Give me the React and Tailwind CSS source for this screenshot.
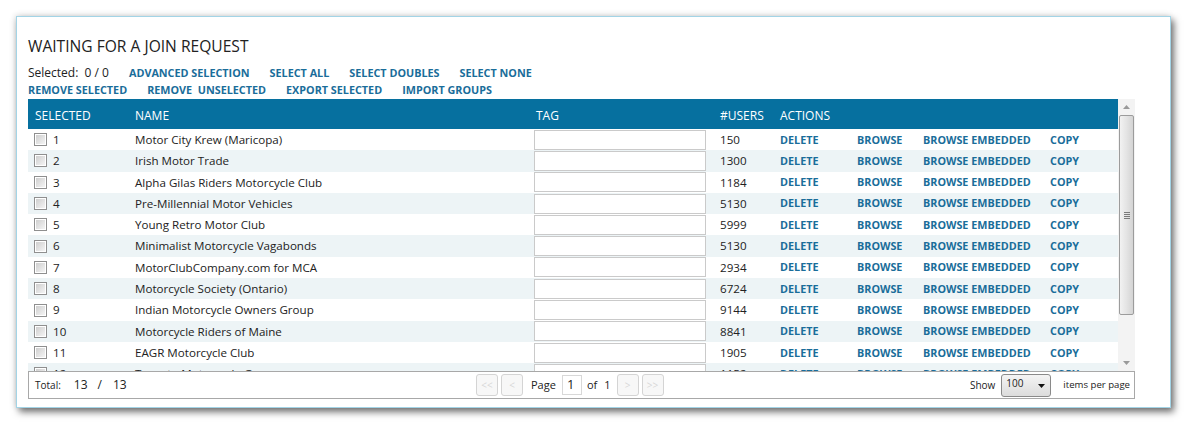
const rows = [
  [1, "Motor City Krew (Maricopa)", 150],
  [2, "Irish Motor Trade", 1300],
  [3, "Alpha Gilas Riders Motorcycle Club", 1184],
  [4, "Pre-Millennial Motor Vehicles", 5130],
  [5, "Young Retro Motor Club", 5999],
  [6, "Minimalist Motorcycle Vagabonds", 5130],
  [7, "MotorClubCompany.com for MCA", 2934],
  [8, "Motorcycle Society (Ontario)", 6724],
  [9, "Indian Motorcycle Owners Group", 9144],
  [10, "Motorcycle Riders of Maine", 8841],
  [11, "EAGR Motorcycle Club", 1905],
  [12, "Toronto Motorcycle Group", 1152],
];

const font = { fontFamily: '"Open Sans", "Noto Sans", sans-serif' };

function Checkbox() {
  return (
    <span className="flex h-[13px] w-[13px] items-center justify-center border border-[#8f8f8f] bg-white">
      <span className="h-[9px] w-[9px] bg-gradient-to-br from-[#cfcfcf] to-[#f4f4f4]" />
    </span>
  );
}

function Link({ children, className = "" }) {
  return <span className={`text-[10.8px] font-bold text-[#1a6d9a] ${className}`}>{children}</span>;
}

function PageButton({ children }) {
  return (
    <span className="flex h-[22px] w-[22px] items-center justify-center rounded-[3px] border border-[#d4d4d4] bg-[#f7f7f7] text-[10px] text-[#d8d8d8]">
      {children}
    </span>
  );
}

function Scrollbar() {
  return (
    <div className="flex w-[17px] flex-col items-center bg-[#f3f3f3]">
      <div className="flex h-[16px] items-center justify-center">
        <svg width="7" height="4" viewBox="0 0 7 4"><path d="M0 4L3.5 0L7 4Z" fill="#9a9a9a" /></svg>
      </div>
      <div className="flex h-[200px] w-[15px] items-center justify-center rounded-[2px] border border-[#9c9c9c] bg-gradient-to-r from-[#f2f2f2] via-[#e4e4e4] to-[#d4d4d4]">
        <div className="flex flex-col gap-[1px]">
          <span className="h-[1px] w-[6px] bg-[#7a7a7a]" />
          <span className="h-[1px] w-[6px] bg-[#7a7a7a]" />
          <span className="h-[1px] w-[6px] bg-[#7a7a7a]" />
          <span className="h-[1px] w-[6px] bg-[#7a7a7a]" />
        </div>
      </div>
      <div className="flex-1" />
      <div className="flex h-[16px] items-center justify-center">
        <svg width="7" height="4" viewBox="0 0 7 4"><path d="M0 0L7 0L3.5 4Z" fill="#9a9a9a" /></svg>
      </div>
    </div>
  );
}

export default function App() {
  return (
    <div className="h-[425px] w-[1187px] bg-white pl-[16px] pt-[16px] text-[#222]" style={font}>
      <div className="h-[392px] w-[1155px] border border-[#a3d4e6] bg-white pl-[11px] pt-[19px] shadow-[3px_4px_7px_rgba(0,0,0,0.55),_-1px_-1px_6px_rgba(0,0,0,0.12)]">
        <div className="h-[20px] text-[15.6px] leading-[20px]">WAITING FOR A JOIN REQUEST</div>

        <div className="mt-[8px] flex h-[18px] items-center gap-[20px]">
          <span className="text-[12px]">
            Selected:&nbsp; 0 / 0
          </span>
          <Link>ADVANCED SELECTION</Link>
          <Link>SELECT ALL</Link>
          <Link>SELECT DOUBLES</Link>
          <Link>SELECT NONE</Link>
        </div>
        <div className="flex h-[17px] items-center gap-[20px]">
          <Link>REMOVE SELECTED</Link>
          <Link>REMOVE&nbsp; UNSELECTED</Link>
          <Link>EXPORT SELECTED</Link>
          <Link>IMPORT GROUPS</Link>
        </div>

        <div className="flex h-[272px] w-[1107px]">
          <div className="w-[1090px] overflow-hidden">
            <div className="flex h-[30px] items-center bg-[#06709f] pt-[3px] text-[12px] text-white">
              <span className="w-[107px]">
                <span className="ml-[7px]">SELECTED</span>
              </span>
              <span className="w-[401px]">NAME</span>
              <span className="w-[184px]">TAG</span>
              <span className="w-[60px]">#USERS</span>
              <span>ACTIONS</span>
            </div>
            {rows.map(([n, name, users], i) => (
              <div
                key={n}
                className={`flex h-[21.3px] items-center text-[11.6px] ${i % 2 ? "bg-[#edf4f6]" : "bg-white"}`}
              >
                <span className="flex w-[107px] items-center gap-[6px] pl-[6px]">
                  <Checkbox />
                  {n}
                </span>
                <span className="w-[399px]">{name}</span>
                <span className="w-[186px]">
                  <span className="block h-[20px] w-[172px] border border-[#cacaca] bg-white" />
                </span>
                <span className="w-[60px]">{users}</span>
                <Link className="w-[77px]">DELETE</Link>
                <Link className="w-[66px]">BROWSE</Link>
                <Link className="w-[127px]">BROWSE EMBEDDED</Link>
                <Link>COPY</Link>
              </div>
            ))}
          </div>
          <Scrollbar />
        </div>

        <div className="flex h-[28px] w-[1107px] items-center border border-[#a8a8a8] bg-white">
          <div className="flex w-[447px] items-baseline pl-[6px]">
            <span className="text-[10px]">Total:</span>
            <span className="ml-[13px] text-[12px]">13</span>
            <span className="ml-[10px] text-[12px]">/</span>
            <span className="ml-[11px] text-[12px]">13</span>
          </div>
          <div className="flex items-center text-[11px]">
            <PageButton>&lt;&lt;</PageButton>
            <span className="ml-[3px]"><PageButton>&lt;</PageButton></span>
            <span className="ml-[8px]">Page</span>
            <span className="ml-[6px] flex h-[20px] w-[20px] items-center border border-[#d8d8d8] pl-[4px] text-[13px]">1</span>
            <span className="ml-[5px]">of</span>
            <span className="ml-[7px]">1</span>
            <span className="ml-[6px]"><PageButton>&gt;</PageButton></span>
            <span className="ml-[3px]"><PageButton>&gt;&gt;</PageButton></span>
          </div>
          <div className="ml-auto flex items-center pr-[4px] text-[10px]">
            <span>Show</span>
            <span className="ml-[6px] flex h-[23px] w-[50px] items-start justify-between rounded-[3px] border border-[#8a8a8a] bg-gradient-to-b from-[#f4f4f4] to-[#dcdcdc] pl-[4px] pr-[5px] pt-[1px] text-[10px]">
              100
              <svg className="mt-[8px]" width="7" height="4" viewBox="0 0 7 4"><path d="M0 0L7 0L3.5 4Z" fill="#111" /></svg>
            </span>
            <span className="ml-[12px] text-[9.6px]">items per page</span>
          </div>
        </div>
      </div>
    </div>
  );
}
